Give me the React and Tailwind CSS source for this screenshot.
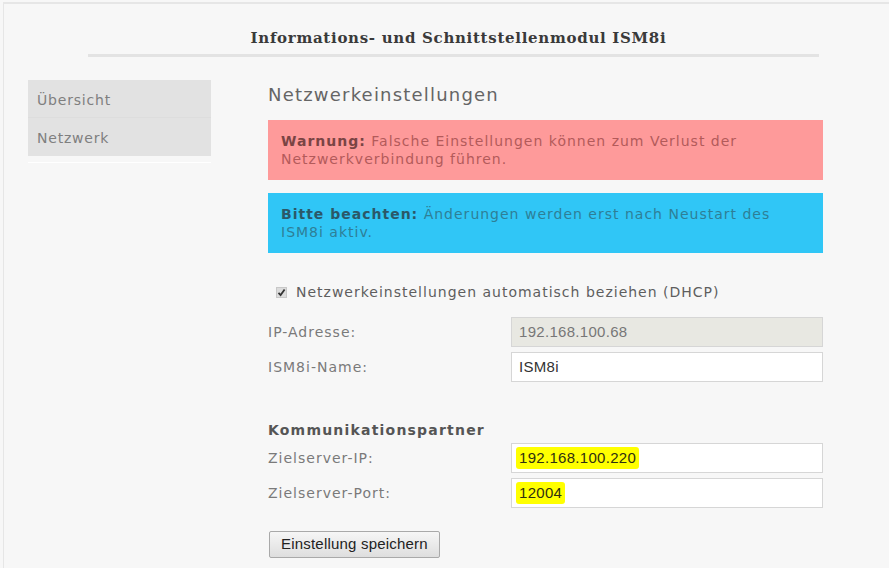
import React from "react";

const sans = { fontFamily: '"DejaVu Sans", Verdana, sans-serif' };
const arial = { fontFamily: '"Liberation Sans", Arial, sans-serif' };

function Row({ label, children }) {
  return (
    <div className="flex items-center h-[30px]">
      <div className="w-[243px] text-[14px] tracking-[1px] text-[#7a7a7a]" style={sans}>{label}</div>
      <div className="w-[312px] h-full">{children}</div>
    </div>
  );
}

function Field({ value, disabled, highlight }) {
  return (
    <div
      className={`h-full border border-[#d6d6d6] flex items-center pl-[7px] text-[15px] tracking-[0.3px] ${disabled ? "bg-[#e8e8e2] text-[#777]" : "bg-white text-[#333]"}`}
      style={arial}
    >
      {highlight ? (
        <span className="bg-[#ffff00] px-[3px] -ml-[3px] leading-[22px] rounded-[3px] text-[#2f2f10]">{value}</span>
      ) : (
        value
      )}
    </div>
  );
}

export default function App() {
  return (
    <div className="w-[889px] h-[568px] bg-[#f7f7f7] overflow-hidden">
      <div className="mt-[2px] ml-[3px] h-[566px] border-t-2 border-l border-[#e6e6e6] bg-[#f7f7f7]">
        <div className="pt-[24px] flex justify-center pl-[24px]">
          <h1
            className="text-[15px] font-bold text-[#3a3a3a] tracking-[0.7px] leading-[20px]"
            style={{ fontFamily: '"DejaVu Serif", Georgia, serif' }}
          >
            Informations- und Schnittstellenmodul ISM8i
          </h1>
        </div>
        <div className="mt-[6px] ml-[84px] w-[731px] h-[3px] bg-[#e3e3e3]" />

        <div className="flex mt-[23px]">
          <div className="ml-[24px] w-[183px]">
            <div className="bg-[#e2e2e2] text-[14px] tracking-[0.8px] text-[#7f7f7f]" style={sans}>
              <div className="h-[38px] flex items-center pl-[9px] pt-[3px] border-b border-[#dddddd]">Übersicht</div>
              <div className="h-[38px] flex items-center pl-[9px] pt-[3px]">Netzwerk</div>
            </div>
            <div className="mt-[6px] h-[1px] bg-white" />
          </div>

          <div className="ml-[57px] w-[555px]" style={sans}>
            <h2 className="text-[18px] leading-[24px] mt-[3px] tracking-[1.2px] text-[#656565]">Netzwerkeinstellungen</h2>

            <div className="mt-[13px] bg-[#fe9a9a] px-[13px] py-[12px] text-[14px] tracking-[1px] leading-[18px] text-[#b35a5a]">
              <span className="font-bold text-[#7a4444]">Warnung:</span> Falsche Einstellungen können zum Verlust der
              <br />
              Netzwerkverbindung führen.
            </div>

            <div className="mt-[13px] bg-[#30c6f6] px-[13px] py-[12px] text-[14px] tracking-[1px] leading-[18px] text-[#2e7f96]">
              <span className="font-bold text-[#2b5868]">Bitte beachten:</span> Änderungen werden erst nach Neustart des
              <br />
              ISM8i aktiv.
            </div>

            <div className="mt-[29px] flex items-center h-[20px] pl-[8px]">
              <span className="w-[11px] h-[11px] bg-[#dcdcdc] border border-[#c8c8c8] flex items-center justify-center">
                <svg width="9" height="9" viewBox="0 0 9 9">
                  <path d="M1.5 4.8 L3.6 7 L7.6 1.5" fill="none" stroke="#333" strokeWidth="1.8" />
                </svg>
              </span>
              <span className="ml-[9px] text-[14px] tracking-[1px] text-[#5e5e5e]">Netzwerkeinstellungen automatisch beziehen (DHCP)</span>
            </div>

            <div className="mt-[15px]">
              <Row label="IP-Adresse:"><Field value="192.168.100.68" disabled /></Row>
              <div className="h-[5px]" />
              <Row label="ISM8i-Name:"><Field value="ISM8i" /></Row>
            </div>

            <div className="mt-[38px] text-[14px] font-bold tracking-[1.2px] leading-[20px] text-[#555]">Kommunikationspartner</div>

            <div className="mt-[3px]">
              <Row label="Zielserver-IP:"><Field value="192.168.100.220" highlight /></Row>
              <div className="h-[5px]" />
              <Row label="Zielserver-Port:"><Field value="12004" highlight /></Row>
            </div>

            <button
              className="mt-[23px] ml-[1px] h-[27px] px-[11px] border border-[#a9a9a9] bg-gradient-to-b from-[#f6f6f6] to-[#dedede] text-[15px] tracking-[0.2px] text-[#222] rounded-[2px]"
              style={arial}
            >
              Einstellung speichern
            </button>
          </div>
        </div>
      </div>
    </div>
  );
}
